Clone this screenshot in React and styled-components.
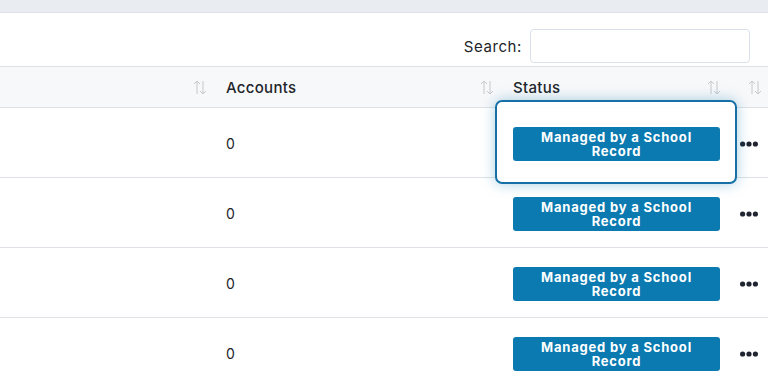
import React from 'react';
import styled, { createGlobalStyle } from 'styled-components';

const GlobalStyle = createGlobalStyle`
  html, body {
    margin: 0;
    padding: 0;
    background: #ffffff;
    font-family: Inter, "Open Sans", sans-serif;
    color: #212529;
    overflow: hidden;
  }
`;

const TopBar = styled.div`
  height: 12px;
  background: #e9edf2;
  border-bottom: 1px solid #dde2e8;
`;

const Toolbar = styled.div`
  display: flex;
  justify-content: flex-end;
  align-items: center;
  gap: 8px;
  padding: 16px 18px 3px 0;
`;

const Label = styled.label`
  font-size: 15px;
  letter-spacing: 0.6px;
  color: #212529;
`;

const SearchInput = styled.input`
  box-sizing: border-box;
  width: 220px;
  height: 34px;
  border: 1px solid #d9e1ea;
  border-radius: 4px;
  outline: none;
`;

const Grid = styled.div`
  display: grid;
  grid-template-columns: 213px 287px 227px 1fr;
`;

const HeadCell = styled.div`
  position: relative;
  height: 40px;
  display: flex;
  align-items: center;
  padding: 0 13px;
  background: #f7f8fa;
  border-top: 1px solid #dee2e6;
  border-bottom: 1px solid #dee2e6;
  font-size: 15px;
  font-weight: 500;
  letter-spacing: 0.3px;
  color: #212529;
`;

const SortIcon = styled.svg`
  position: absolute;
  right: ${p => p.$right}px;
  top: 13px;
`;

const Cell = styled.div`
  position: relative;
  height: 69px;
  display: flex;
  align-items: center;
  padding: 2px 13px 0;
  box-sizing: border-box;
  height: 70px;
  border-bottom: 1px solid #dee2e6;
  font-size: 14px;
  color: #212529;
`;

const FocusRing = styled.div`
  position: absolute;
  top: -8px;
  left: -5px;
  right: -10px;
  bottom: -7px;
  border: 2.5px solid #166fa6;
  border-radius: 7px;
  background: rgba(255, 255, 255, 0.88);
  box-shadow: 0 0 14px rgba(10, 122, 176, 0.35);
  z-index: 1;
`;

const Badge = styled.span`
  position: relative;
  z-index: 2;
  display: block;
  flex-shrink: 0;
  box-sizing: border-box;
  width: 207px;
  padding: 3px 24px 2px;
  background: #0a7ab0;
  border-radius: 3px;
  color: #ffffff;
  font-size: 13px;
  font-weight: 700;
  line-height: 14.5px;
  text-align: center;
  letter-spacing: 0.8px;
`;

const Dots = () => (
  <svg width="19" height="6" viewBox="0 0 19 6">
    <circle cx="2.6" cy="3" r="2.6" fill="#1f2430" />
    <circle cx="9" cy="3" r="2.6" fill="#1f2430" />
    <circle cx="15.4" cy="3" r="2.6" fill="#1f2430" />
  </svg>
);

const Sort = ({ right }) => (
  <SortIcon $right={right} width="14" height="15" viewBox="0 0 14 15" fill="none" stroke="#c4c8cc" strokeWidth="1">
    <path d="M4 14V1M1 4l3-3 3 3" />
    <path d="M10 1v13M7 11l3 3 3-3" />
  </SortIcon>
);

const headers = ['', 'Accounts', 'Status', ''];
const rows = [0, 0, 0, 0];

export default function App() {
  return (
    <>
      <GlobalStyle />
      <TopBar />
      <Toolbar>
        <Label htmlFor="search">Search:</Label>
        <SearchInput id="search" type="search" />
      </Toolbar>
      <Grid>
        {headers.map((h, i) => (
          <HeadCell key={i}>
            {h}
            <Sort right={i === 3 ? 10 : 6} />
          </HeadCell>
        ))}
        {rows.map((n, i) => (
          <React.Fragment key={i}>
            <Cell />
            <Cell>{n}</Cell>
            <Cell>
              {i === 0 && <FocusRing />}
              <Badge>Managed by a School Record</Badge>
            </Cell>
            <Cell>
              <Dots />
            </Cell>
          </React.Fragment>
        ))}
      </Grid>
    </>
  );
}
